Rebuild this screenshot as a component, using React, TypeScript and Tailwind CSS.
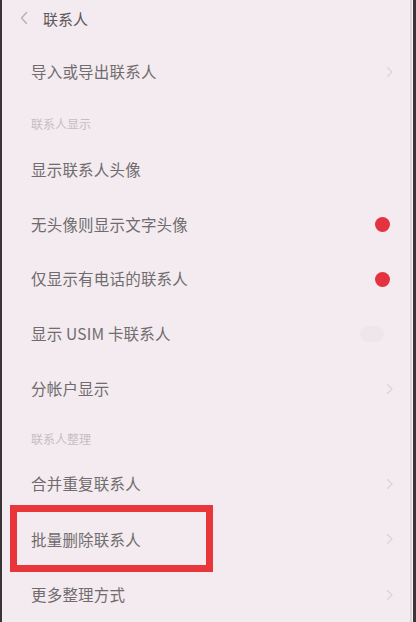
import React from "react";

const font = { fontFamily: '"Noto Sans CJK SC", "Noto Sans", sans-serif' };

function Chevron() {
  return (
    <svg width="8" height="12" viewBox="0 0 8 12" className="shrink-0">
      <path d="M1.5 1.5 L6 6 L1.5 10.5" fill="none" stroke="#ddd4d8" strokeWidth="1.4" strokeLinecap="round" strokeLinejoin="round" />
    </svg>
  );
}

function Row({
  label,
  right,
  h = "h-[55px]",
  children,
}: {
  label: string;
  right?: "chevron" | "dot" | "off" | null;
  h?: string;
  children?: React.ReactNode;
}) {
  return (
    <div className={`relative flex items-center justify-between pl-[29px] pr-[16px] ${h}`}>
      <span className="text-[15.5px] text-[#706b6e] leading-none tracking-[0.2px]">{label}</span>
      {right === "chevron" && <Chevron />}
      {right === "dot" && <div className="w-[15px] h-[15px] rounded-full bg-[#e4333f] mr-[4px]" />}
      {right === "off" && <div className="w-[24px] h-[16px] rounded-full bg-[#eee6ea] mr-[10px]" />}
      {children}
    </div>
  );
}

function Section({ label, h }: { label: string; h: string }) {
  return (
    <div className={`flex items-end pl-[29px] pb-[10px] ${h}`}>
      <span className="text-[12px] leading-[16px] text-[#c6bdc1]">{label}</span>
    </div>
  );
}

export default function App() {
  return (
    <div className="w-[416px] h-[622px] overflow-hidden flex bg-[#f3ebef]" style={font}>
      <div className="w-[2px] h-full bg-[#3a3437]" />
      <div className="flex-1 flex flex-col">
        <div className="h-[44px] flex items-start pt-[10px] pl-[17px]">
          <div className="flex items-center h-[16px] gap-[14px]">
            <svg width="10" height="14" viewBox="0 0 10 14">
              <path d="M7.5 1.5 L2.5 7 L7.5 12.5" fill="none" stroke="#b5adb1" strokeWidth="1.3" strokeLinecap="round" strokeLinejoin="round" />
            </svg>
            <span className="text-[15px] leading-none text-[#5c5759]">联系人</span>
          </div>
        </div>
        <Row label="导入或导出联系人" right="chevron" h="h-[56px]" />
        <Section label="联系人显示" h="h-[43px]" />
        <Row label="显示联系人头像" />
        <Row label="无头像则显示文字头像" right="dot" />
        <Row label="仅显示有电话的联系人" right="dot" />
        <Row label="显示 USIM 卡联系人" right="off" />
        <Row label="分帐户显示" right="chevron" />
        <Section label="联系人整理" h="h-[41px]" />
        <Row label="合并重复联系人" right="chevron" />
        <Row label="批量删除联系人" right="chevron" h="h-[56px]">
          <div className="absolute left-[8px] top-[-7px] w-[203px] h-[67px] border-[7px] border-[#e8363b]" />
        </Row>
        <Row label="更多整理方式" right="chevron" />
      </div>
      <div className="w-[2px] h-full bg-[#dcd5d9]" />
      <div className="w-[1px] h-full bg-[#f6f0f3]" />
      <div className="w-[3px] h-full bg-[#3b3539]" />
    </div>
  );
}
